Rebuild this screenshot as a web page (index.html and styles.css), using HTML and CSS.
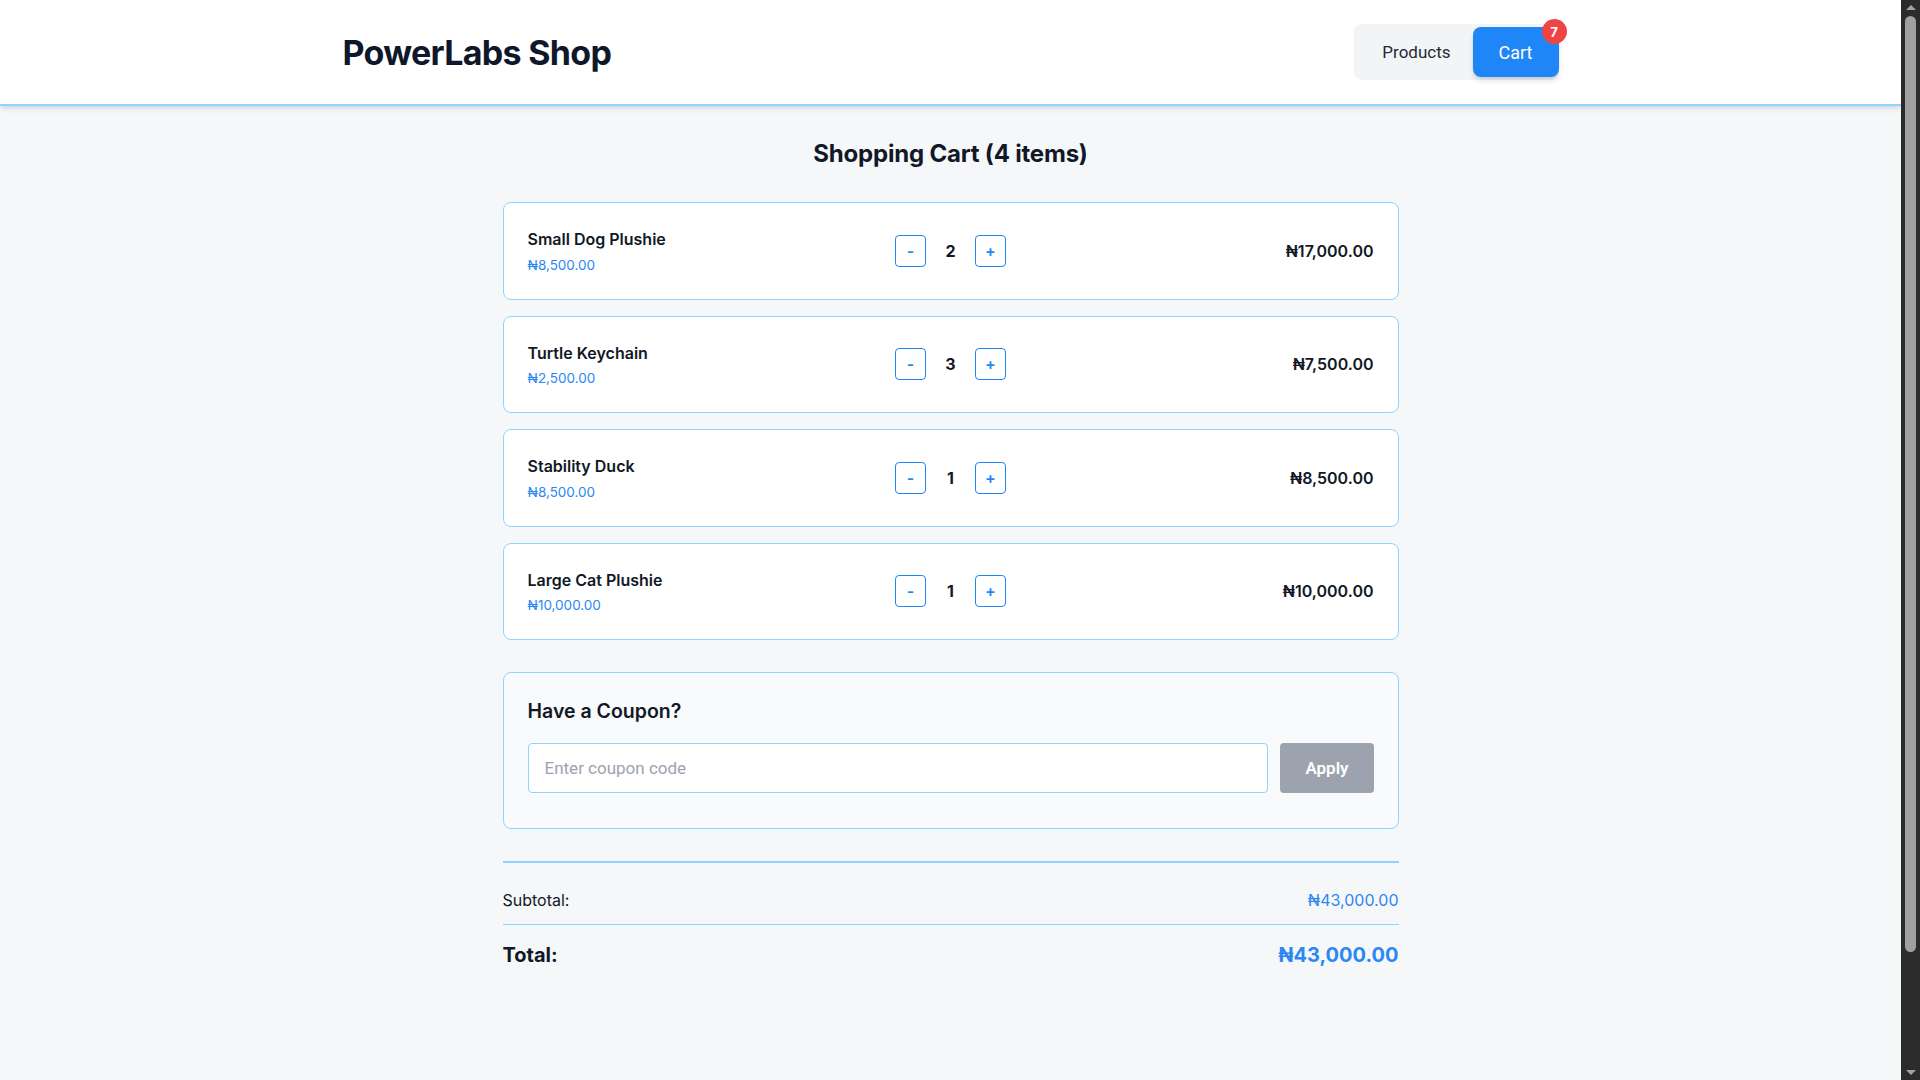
FILE: index.html
```html
<!DOCTYPE html>
<html lang="en">
<head>
<meta charset="utf-8">
<title>PowerLabs Shop</title>
<link rel="stylesheet" href="styles.css">
</head>
<body>
<header class="site-header">
  <div class="header-inner">
    <h1 class="brand">PowerLabs Shop</h1>
    <nav class="nav">
      <button class="nav-btn">Products</button>
      <button class="nav-btn nav-btn--active">Cart<span class="badge">7</span></button>
    </nav>
  </div>
</header>
<main class="main">
  <div class="cart">
    <h2 class="cart-title">Shopping Cart (4 items)</h2>
    <div class="items">
      <div class="item">
        <div class="item-info">
          <div class="item-name">Small Dog Plushie</div>
          <div class="item-price">₦8,500.00</div>
        </div>
        <div class="qty">
          <button class="qty-btn">-</button>
          <span class="qty-num">2</span>
          <button class="qty-btn">+</button>
        </div>
        <div class="item-total">₦17,000.00</div>
      </div>
      <div class="item">
        <div class="item-info">
          <div class="item-name">Turtle Keychain</div>
          <div class="item-price">₦2,500.00</div>
        </div>
        <div class="qty">
          <button class="qty-btn">-</button>
          <span class="qty-num">3</span>
          <button class="qty-btn">+</button>
        </div>
        <div class="item-total">₦7,500.00</div>
      </div>
      <div class="item">
        <div class="item-info">
          <div class="item-name">Stability Duck</div>
          <div class="item-price">₦8,500.00</div>
        </div>
        <div class="qty">
          <button class="qty-btn">-</button>
          <span class="qty-num">1</span>
          <button class="qty-btn">+</button>
        </div>
        <div class="item-total">₦8,500.00</div>
      </div>
      <div class="item">
        <div class="item-info">
          <div class="item-name">Large Cat Plushie</div>
          <div class="item-price">₦10,000.00</div>
        </div>
        <div class="qty">
          <button class="qty-btn">-</button>
          <span class="qty-num">1</span>
          <button class="qty-btn">+</button>
        </div>
        <div class="item-total">₦10,000.00</div>
      </div>
    </div>

    <section class="coupon">
      <h3 class="coupon-title">Have a Coupon?</h3>
      <div class="coupon-row">
        <input class="coupon-input" type="text" placeholder="Enter coupon code">
        <button class="coupon-btn">Apply</button>
      </div>
    </section>

    <section class="summary">
      <div class="summary-row">
        <span>Subtotal:</span>
        <span class="summary-value">₦43,000.00</span>
      </div>
      <div class="total-row">
        <span>Total:</span>
        <span class="total-value">₦43,000.00</span>
      </div>
    </section>
  </div>
</main>
<aside class="scrollbar" aria-hidden="true">
  <span class="sb-arrow sb-arrow--up"></span>
  <div class="sb-track"><div class="sb-thumb"></div></div>
  <span class="sb-arrow sb-arrow--down"></span>
</aside>
</body>
</html>
```
FILE: styles.css
```css
* { box-sizing: border-box; }
html, body { margin: 0; padding: 0; }
body {
  background: #f6f7f9;
  font-family: Inter, "Noto Sans", sans-serif;
  color: #111827;
  padding-right: 19px;
}

.site-header {
  background: #ffffff;
  height: 106px;
  border-bottom: 2px solid #8fd3fe;
  box-shadow: 0 4px 6px -1px rgba(0,0,0,0.10), 0 2px 4px -2px rgba(0,0,0,0.08);
  position: relative;
  z-index: 1;
}
.header-inner {
  max-width: 1280px;
  height: 100%;
  margin: 0 auto;
  padding: 0 32px;
  display: flex;
  align-items: center;
  justify-content: space-between;
}
.brand {
  margin: 0;
  font-size: 34px;
  font-weight: 700;
  letter-spacing: -0.7px;
  color: #0f172a;
}
.nav {
  display: flex;
  background: #f3f4f6;
  border-radius: 8px;
  padding: 3px 0 3px 4px;
}
.nav-btn {
  font-family: Roboto, "Liberation Sans", sans-serif;
  font-size: 17px;
  height: 50px;
  padding: 0 22px 0 24px;
  border: none;
  background: transparent;
  color: #1f2937;
  border-radius: 8px;
  cursor: pointer;
  position: relative;
}
.nav-btn--active {
  background: #1e86f6;
  color: #ffffff;
  font-size: 18px;
  padding: 0 26px;
  box-shadow: 0 4px 6px -1px rgba(0,0,0,0.15), 0 2px 4px -2px rgba(0,0,0,0.1);
}
.badge {
  position: absolute;
  top: -8px;
  right: -8px;
  width: 25px;
  height: 25px;
  border-radius: 50%;
  background: #ef4444;
  color: #fff;
  font-family: Inter, sans-serif;
  font-size: 13px;
  font-weight: 700;
  display: flex;
  align-items: center;
  justify-content: center;
}

.main {
  min-height: 1101px;
  padding: 32px 16px 48px;
}
.cart {
  max-width: 896px;
  margin: 0 auto;
}
.cart-title {
  margin: 0 0 32px;
  text-align: center;
  font-size: 24px;
  line-height: 32px;
  font-weight: 650;
  letter-spacing: -0.2px;
  color: #111827;
}
.items {
  display: flex;
  flex-direction: column;
  gap: 16px;
}
.item {
  background: #ffffff;
  border: 1px solid #8fd3fe;
  border-radius: 8px;
  padding: 24px;
  display: grid;
  grid-template-columns: 1fr auto 1fr;
  align-items: center;
}
.item-name {
  font-size: 16px;
  line-height: 24px;
  font-weight: 600;
  color: #111827;
}
.item-price {
  margin-top: 3.5px;
  font-size: 13.5px;
  line-height: 20px;
  color: #2b87f3;
}
.qty {
  display: flex;
  align-items: center;
}
.qty-btn {
  width: 31px;
  height: 32px;
  border: 1px solid #1e86f6;
  border-radius: 4px;
  background: #ffffff;
  color: #1e86f6;
  font-family: Inter, sans-serif;
  font-size: 16px;
  font-weight: 600;
  padding: 0;
  cursor: pointer;
}
.qty-num {
  width: 49px;
  text-align: center;
  font-size: 16px;
  font-weight: 700;
  color: #111827;
}
.item-total {
  text-align: right;
  font-size: 16px;
  font-weight: 600;
  color: #111827;
}

.coupon {
  margin-top: 32px;
  background: #f9fafb;
  border: 1px solid #8fd3fe;
  border-radius: 8px;
  padding: 24px 24px 35px;
}
.coupon-title {
  margin: 0 0 18px;
  font-size: 19.5px;
  line-height: 28px;
  font-weight: 600;
  color: #111827;
}
.coupon-row {
  display: flex;
  gap: 12px;
}
.coupon-input {
  flex: 1;
  height: 50px;
  border: 1px solid #8fd3fe;
  border-radius: 4px;
  background: #ffffff;
  padding: 0 16px;
  font-family: Roboto, "Liberation Sans", sans-serif;
  font-size: 17px;
  color: #111827;
}
.coupon-input::placeholder { color: #9ca3af; }
.coupon-btn {
  height: 50px;
  padding: 0 25px;
  border: none;
  border-radius: 4px;
  background: #9ca3af;
  color: #ffffff;
  font-family: Roboto, "Liberation Sans", sans-serif;
  font-size: 17px;
  font-weight: 600;
}

.summary {
  margin-top: 32px;
  border-top: 2px solid #8fd3fe;
  padding-top: 25px;
}
.summary-row {
  display: flex;
  justify-content: space-between;
  font-size: 16px;
  line-height: 24px;
  padding-bottom: 12px;
  border-bottom: 1px solid #8fd3fe;
  color: #111827;
}
.summary-value { color: #2b87f3; }
.total-row {
  margin-top: 16px;
  display: flex;
  justify-content: space-between;
  font-size: 20px;
  line-height: 28px;
  font-weight: 700;
  color: #111827;
}
.total-value { color: #2b87f3; }

/* decorative stand-in for the browser's classic scrollbar */
.scrollbar {
  position: fixed;
  top: 0;
  right: 0;
  width: 19px;
  height: 100vh;
  background: #2b2b2b;
  display: flex;
  flex-direction: column;
  align-items: center;
  z-index: 10;
}
.sb-arrow {
  width: 0;
  height: 0;
  border-left: 5px solid transparent;
  border-right: 5px solid transparent;
  margin: 5px 0;
}
.sb-arrow--up { border-bottom: 5px solid #a3a3a3; }
.sb-arrow--down { border-top: 5px solid #a3a3a3; }
.sb-track {
  flex: 1;
  width: 100%;
  display: flex;
  justify-content: center;
  padding-top: 1px;
}
.sb-thumb {
  width: 11px;
  height: 936px;
  background: #a0a0a0;
  border-radius: 6px;
}
```
